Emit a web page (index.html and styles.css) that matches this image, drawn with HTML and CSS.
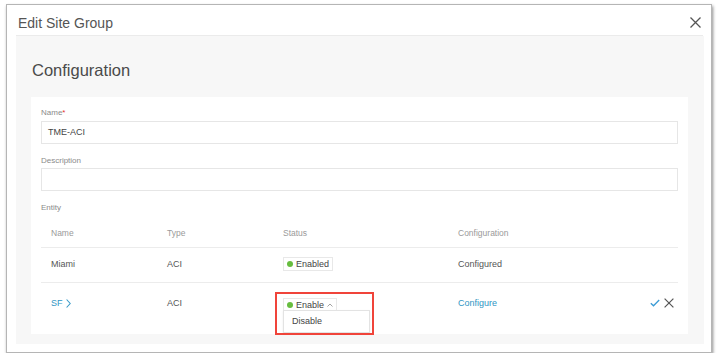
FILE: index.html
```html
<!DOCTYPE html>
<html>
<head>
<meta charset="utf-8">
<link rel="stylesheet" href="styles.css">
</head>
<body>
<div class="modal">
  <div class="modal-header">
    <span class="modal-title">Edit Site Group</span>
    <svg class="close" width="11" height="11" viewBox="0 0 11 11"><path d="M0.5 0.5L10.5 10.5M10.5 0.5L0.5 10.5" stroke="#555" stroke-width="1.3" fill="none"/></svg>
  </div>
  <div class="modal-body">
    <h2 class="section-title">Configuration</h2>
    <div class="card">
      <div class="label">Name<span class="req">*</span></div>
      <div class="input">TME-ACI</div>
      <div class="label label-gap">Description</div>
      <div class="input"></div>
      <div class="label label-gap">Entity</div>
      <div class="table">
        <div class="row head">
          <div class="cell">Name</div>
          <div class="cell">Type</div>
          <div class="cell status">Status</div>
          <div class="cell">Configuration</div>
          <div class="cell actions"></div>
        </div>
        <div class="row row1">
          <div class="cell">Miami</div>
          <div class="cell">ACI</div>
          <div class="cell status"><span class="pill"><span class="dot"></span>Enabled</span></div>
          <div class="cell">Configured</div>
          <div class="cell actions"></div>
        </div>
        <div class="row row2">
          <div class="cell link">SF <svg class="chev" width="5" height="9" viewBox="0 0 5 9"><path d="M0.6 0.5L4.2 4.5L0.6 8.5" stroke="#3a9bc8" stroke-width="1.1" fill="none"/></svg></div>
          <div class="cell">ACI</div>
          <div class="cell status">
            <div class="select">
              <span class="pill"><span class="dot"></span>Enable<svg class="caret" width="6" height="4" viewBox="0 0 6 4"><path d="M0.5 3.5L3 1L5.5 3.5" stroke="#999" stroke-width="0.9" fill="none"/></svg></span>
              <div class="menu">Disable</div>
              <div class="highlight"></div>
            </div>
          </div>
          <div class="cell link">Configure</div>
          <div class="cell actions">
            <svg width="10" height="8" viewBox="0 0 10 8"><path d="M0.8 4.2L3.5 6.8L9.2 1" stroke="#3a9bd5" stroke-width="1.3" fill="none"/></svg>
            <svg width="10" height="10" viewBox="0 0 10 10"><path d="M0.6 0.6L9.4 9.4M9.4 0.6L0.6 9.4" stroke="#555" stroke-width="1.2" fill="none"/></svg>
          </div>
        </div>
      </div>
    </div>
  </div>
</div>
</body>
</html>
```
FILE: styles.css
```css
html, body {
  margin: 0;
  background: #ffffff;
}
body {
  padding: 4px 0 0 6px;
  font-family: "Liberation Sans", Arial, sans-serif;
  color: #555;
}
.modal {
  box-sizing: border-box;
  width: 706px;
  height: 349px;
  background: #fff;
  border: 1px solid #b5b5b5;
  box-shadow: 1px 2px 3px rgba(0,0,0,0.45);
  display: flex;
  flex-direction: column;
}
.modal-header {
  margin: 0 8px 0 9px;
  height: 30px;
  border-bottom: 1px solid #ebebeb;
  display: flex;
  justify-content: space-between;
  align-items: flex-start;
  padding: 0 2px;
}
.modal-title {
  font-size: 14px;
  line-height: 24px;
  padding-top: 6px;
  color: #555;
}
.close {
  margin-top: 12px;
}
.modal-body {
  margin: 0 7px 8px 9px;
  background: #f7f7f7;
  flex: 1;
  padding: 24px 16px 10px 15px;
  display: flex;
  flex-direction: column;
}
.section-title {
  margin: 0 0 17px 1px;
  font-size: 16.5px;
  line-height: 20px;
  font-weight: normal;
  color: #4a4a4a;
}
.card {
  flex: 1;
  background: #fff;
  padding: 10px 10px 0 10px;
}
.label {
  font-size: 8px;
  line-height: 12px;
  color: #8a8a8a;
  margin-bottom: 2px;
}
.label-gap {
  margin-top: 11px;
  margin-bottom: 1px;
}
.req {
  color: #e5322d;
}
.input {
  box-sizing: border-box;
  height: 23px;
  border: 1px solid #e6e6e6;
  background: #fff;
  font-size: 9px;
  line-height: 21px;
  padding-left: 6px;
  color: #444;
}
.table {
  margin-top: 4px;
}
.row {
  display: grid;
  grid-template-columns: 116px 117px 174px 1fr auto;
  align-items: center;
  font-size: 9px;
  color: #555;
  box-sizing: border-box;
}
.cell {
  padding-left: 10px;
}
.head {
  height: 30px;
  border-bottom: 1px solid #ececec;
  color: #9a9a9a;
  font-size: 8.5px;
}
.row1 {
  height: 35px;
  padding-bottom: 2px;
  border-bottom: 1px solid #ececec;
}
.row2 {
  height: 40px;
  align-items: start;
  padding-top: 15px;
}
.status {
  padding-left: 9px;
}
.link {
  color: #2f95c4;
  display: flex;
  align-items: center;
  gap: 3px;
}
.chev {
  display: block;
}
.pill {
  display: inline-flex;
  align-items: center;
  box-sizing: border-box;
  height: 14px;
  padding: 0 3px;
  border: 1px solid #e8e8e8;
  background: #fff;
  font-size: 9px;
  color: #444;
}
.dot {
  width: 6px;
  height: 6px;
  border-radius: 50%;
  background: #67bd3f;
  margin-right: 3px;
}
.row2 .pill {
  height: 13px;
}
.caret {
  margin-left: 3px;
  margin-top: 1px;
}
.select {
  position: relative;
  width: 49px;
}
.menu {
  position: absolute;
  left: 0;
  top: 12px;
  box-sizing: border-box;
  width: 87px;
  height: 23px;
  border: 1px solid #e3e3e3;
  background: #fff;
  box-shadow: 0 1px 2px rgba(0,0,0,0.08);
  font-size: 9px;
  line-height: 21px;
  padding-left: 8px;
  color: #444;
}
.highlight {
  position: absolute;
  left: -8px;
  top: -6px;
  width: 99px;
  height: 43px;
  box-sizing: border-box;
  border: 2px solid #f0443a;
}
.actions {
  display: flex;
  align-items: center;
  gap: 4px;
  padding-right: 4px;
}
```
